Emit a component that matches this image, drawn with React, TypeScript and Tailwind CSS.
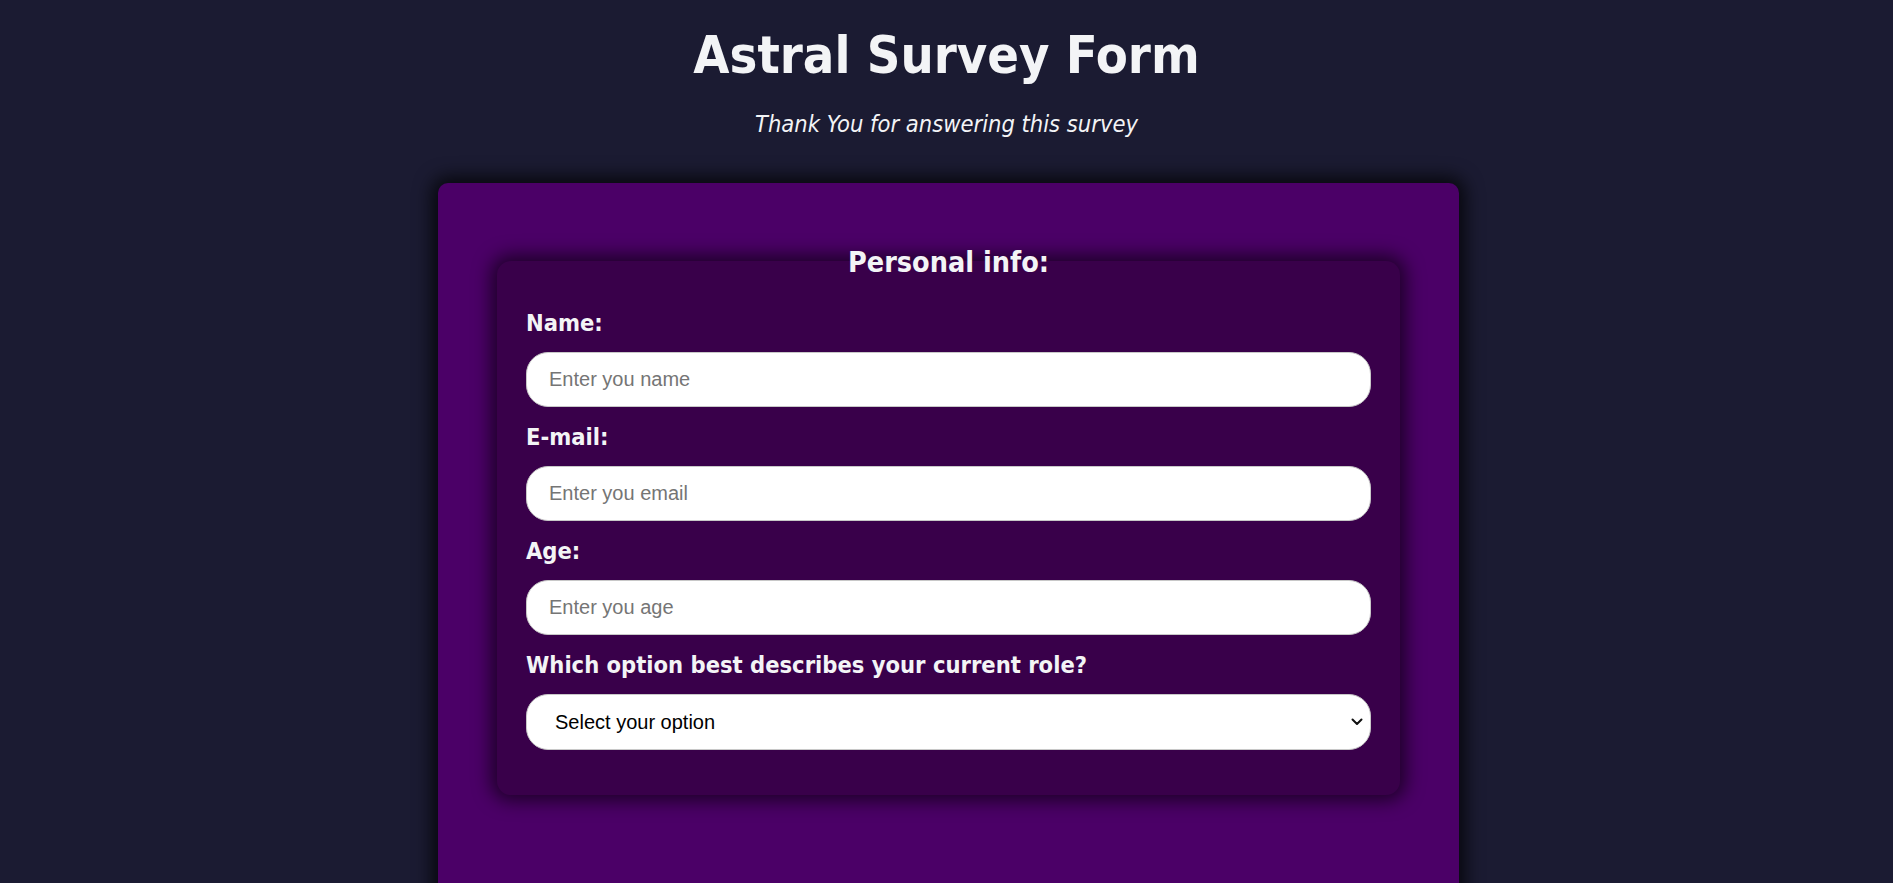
import React from "react";

const font = "font-['Tahoma','DejaVu_Sans_Condensed','DejaVu_Sans',sans-serif]";

function Field({ label, placeholder }: { label: string; placeholder: string }) {
  return (
    <div className="flex flex-col">
      <label className="text-[23.5px] leading-[26px] font-bold text-[#f3f4f6] mb-[16px]">{label}</label>
      <input
        type="text"
        placeholder={placeholder}
        className="h-[55px] w-full rounded-[22px] border border-[#c8c8c8] bg-white px-[22px] font-['Liberation_Sans',Arial,sans-serif] text-[20px] text-black outline-none placeholder:text-[#757575] mb-[17px]"
      />
    </div>
  );
}

export default function App() {
  return (
    <div className={`min-h-screen bg-[#1b1b32] ${font} flex flex-col items-center overflow-hidden`}>
      <h1 className="mt-[24px] text-[52px] leading-[62px] font-bold text-[#f3f4f6]">Astral Survey Form</h1>
      <p className="mt-[24px] text-[23.5px] leading-[28px] italic text-[#f3f4f6]">Thank You for answering this survey</p>
      <div className="mt-[45px] ml-[4px] w-[1021px] rounded-[10px] bg-[#4b0067] px-[59px] pt-[78px] pb-[120px] shadow-[0_0_18px_6px_rgba(0,0,0,0.75)]">
        <div className="flex flex-col rounded-[14px] bg-[#39004a] px-[29px] pb-[45px] shadow-[0_0_18px_6px_rgba(0,0,0,0.6)]">
          <h2 className="-mt-[14px] mb-[32px] text-center text-[28.5px] leading-[31px] font-bold text-[#f3f4f6]">Personal info:</h2>
          <Field label="Name:" placeholder="Enter you name" />
          <Field label="E-mail:" placeholder="Enter you email" />
          <Field label="Age:" placeholder="Enter you age" />
          <div className="flex flex-col">
            <label className="text-[23.5px] leading-[26px] font-bold text-[#f3f4f6] mb-[16px]">
              Which option best describes your current role?
            </label>
            <div className="relative">
              <select
                defaultValue=""
                className="h-[56px] w-full appearance-none rounded-[22px] border border-[#c8c8c8] bg-white pl-[28px] pr-[40px] font-['Liberation_Sans',Arial,sans-serif] text-[20px] text-black outline-none"
              >
                <option value="">Select your option</option>
                <option value="student">Student</option>
                <option value="job">Full Time Job</option>
                <option value="learner">Full Time Learner</option>
                <option value="other">Other</option>
              </select>
              <svg
                className="pointer-events-none absolute right-[8px] top-1/2 -translate-y-1/2"
                width="12"
                height="8"
                viewBox="0 0 12 8"
                fill="none"
              >
                <path d="M1.5 1.5 L6 6 L10.5 1.5" stroke="#111" strokeWidth="2" strokeLinecap="round" strokeLinejoin="round" />
              </svg>
            </div>
          </div>
        </div>
      </div>
    </div>
  );
}
